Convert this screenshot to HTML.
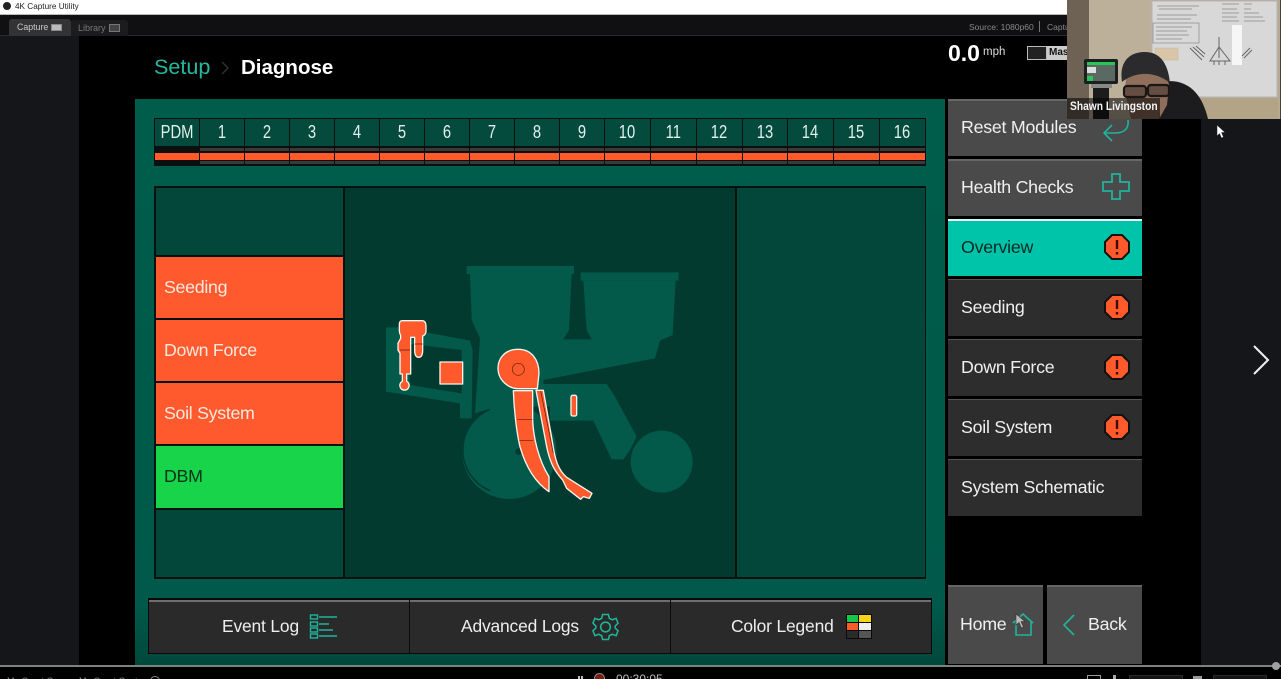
<!DOCTYPE html>
<html><head><meta charset="utf-8">
<style>
html,body{margin:0;padding:0;background:#000}
#p{position:relative;width:1281px;height:679px;overflow:hidden;background:#000;font-family:"Liberation Sans",sans-serif;color:#eee}
#p div,#p span.a,#p svg{position:absolute}
.cell{background:#044a3d;top:119px;height:27px;color:#e2f0ec;font-size:18px;line-height:27px;text-align:center}
.cell span{display:inline-block;transform:scaleX(.82)}
.s1{background:#3a3a3a;top:148px;height:3px}
.s2{background:#ff5a2c;top:153px;height:7px}
.s3{background:#3a3a3a;top:161px;height:3px}
.l{left:156px;width:187px;height:61px;background:#ff5a2e;color:#fbe8de;font-size:17.8px;letter-spacing:-.3px;line-height:61px;text-indent:8px}
.b{left:948px;width:194px;height:57px;font-size:17.8px;letter-spacing:-.25px;line-height:54px;text-indent:13px;color:#f0f0f0;background:#2e2d2d;border-top:1px solid #555;box-sizing:border-box}
.g{background:#4b4a4a;border-top:2px solid #666;line-height:52px}
.bb{top:600px;height:53px;background:#2b2a2a;border-top:2px solid #6e6e6e;box-sizing:border-box;font-size:17.4px;letter-spacing:-.15px;line-height:49px;color:#eee}
.bb span{position:absolute;white-space:nowrap}
</style></head><body>
<div id="p">
<!-- side panels -->
<div style="left:0;top:36px;width:79px;height:629px;background:#15161a"></div>
<div style="left:1201px;top:36px;width:80px;height:629px;background:#15161a"></div>
<!-- title bar -->
<div style="left:0;top:0;width:1281px;height:14px;background:#fff"></div>
<div style="left:0;top:14px;width:1281px;height:1px;background:#bbb"></div>
<div style="left:3px;top:2px;width:8px;height:8px;border-radius:50%;background:#222"></div>
<div style="left:15px;top:1px;font-size:8.2px;line-height:12px;color:#222;white-space:nowrap">4K Capture Utility</div>
<!-- tabs -->
<div style="left:0;top:15px;width:1281px;height:21px;background:#101012;border-bottom:1px solid #2a2a2c;box-sizing:border-box"></div>
<div style="left:9px;top:19px;width:62px;height:17px;background:#333336;border-radius:3px 3px 0 0"></div>
<div style="left:17px;top:21px;font-size:8.8px;line-height:12px;color:#c8c8c8">Capture</div>
<div style="left:51px;top:24px;width:11px;height:7px;background:#bbb;border:1px solid #888;box-sizing:border-box"></div>
<div style="left:71px;top:20px;width:57px;height:16px;background:#1c1c1e;border-radius:3px 3px 0 0"></div>
<div style="left:78px;top:22px;font-size:9px;line-height:12px;color:#777">Library</div>
<div style="left:109px;top:24px;width:11px;height:8px;background:#444;border:1px solid #777;box-sizing:border-box"></div>
<div style="left:969px;top:21px;font-size:8.5px;line-height:12px;color:#8a8a8a;white-space:nowrap">Source: 1080p60</div>
<div style="left:1039px;top:21px;width:1px;height:11px;background:#777"></div>
<div style="left:1047px;top:21px;font-size:8.5px;line-height:12px;color:#8a8a8a;white-space:nowrap">Capture</div>
<!-- heading -->
<div style="left:154px;top:53px;font-size:21.6px;line-height:28px;color:#25b8a0;white-space:nowrap">Setup</div>
<svg style="left:220px;top:60px" width="10" height="16" viewBox="0 0 10 16"><path d="M2 2 L8 8 L2 14" fill="none" stroke="#333" stroke-width="1.4"/></svg>
<div style="left:241px;top:54px;font-size:20.5px;line-height:28px;font-weight:bold;color:#fff;white-space:nowrap">Diagnose</div>
<div style="left:948px;top:38px;font-size:23px;line-height:30px;font-weight:bold;color:#fff;white-space:nowrap">0.0</div>
<div style="left:983px;top:45px;font-size:11.5px;line-height:14px;color:#ddd">mph</div>
<div style="left:1027px;top:46px;width:20px;height:14px;background:#222;border:1px solid #bbb;box-sizing:border-box"></div>
<div style="left:1047px;top:46px;width:22px;height:14px;background:#ccc;color:#111;font-size:10px;font-weight:bold;line-height:14px;overflow:hidden;text-indent:2px">Mas</div>
<!-- green panel -->
<div style="left:135px;top:99px;width:810px;height:566px;background:linear-gradient(#005c4b,#00594a 90%,#01483c)"></div>
<!-- module strip -->
<div style="left:154px;top:118px;width:772px;height:48px;background:#0b0f0e"></div>
<div class="cell" style="left:155px;width:44px"><span>PDM</span></div>
<div style="left:155px;top:153px;width:44px;height:7px;background:#ff5a2c"></div>
<div class="cell" style="left:200px;width:44px"><span>1</span></div><div class="s1" style="left:200px;width:44px"></div><div class="s2" style="left:200px;width:44px"></div><div class="s3" style="left:200px;width:44px"></div>
<div class="cell" style="left:245px;width:44px"><span>2</span></div><div class="s1" style="left:245px;width:44px"></div><div class="s2" style="left:245px;width:44px"></div><div class="s3" style="left:245px;width:44px"></div>
<div class="cell" style="left:290px;width:44px"><span>3</span></div><div class="s1" style="left:290px;width:44px"></div><div class="s2" style="left:290px;width:44px"></div><div class="s3" style="left:290px;width:44px"></div>
<div class="cell" style="left:335px;width:44px"><span>4</span></div><div class="s1" style="left:335px;width:44px"></div><div class="s2" style="left:335px;width:44px"></div><div class="s3" style="left:335px;width:44px"></div>
<div class="cell" style="left:380px;width:44px"><span>5</span></div><div class="s1" style="left:380px;width:44px"></div><div class="s2" style="left:380px;width:44px"></div><div class="s3" style="left:380px;width:44px"></div>
<div class="cell" style="left:425px;width:44px"><span>6</span></div><div class="s1" style="left:425px;width:44px"></div><div class="s2" style="left:425px;width:44px"></div><div class="s3" style="left:425px;width:44px"></div>
<div class="cell" style="left:470px;width:44px"><span>7</span></div><div class="s1" style="left:470px;width:44px"></div><div class="s2" style="left:470px;width:44px"></div><div class="s3" style="left:470px;width:44px"></div>
<div class="cell" style="left:515px;width:44px"><span>8</span></div><div class="s1" style="left:515px;width:44px"></div><div class="s2" style="left:515px;width:44px"></div><div class="s3" style="left:515px;width:44px"></div>
<div class="cell" style="left:560px;width:44px"><span>9</span></div><div class="s1" style="left:560px;width:44px"></div><div class="s2" style="left:560px;width:44px"></div><div class="s3" style="left:560px;width:44px"></div>
<div class="cell" style="left:605px;width:45px"><span>10</span></div><div class="s1" style="left:605px;width:45px"></div><div class="s2" style="left:605px;width:45px"></div><div class="s3" style="left:605px;width:45px"></div>
<div class="cell" style="left:651px;width:45px"><span>11</span></div><div class="s1" style="left:651px;width:45px"></div><div class="s2" style="left:651px;width:45px"></div><div class="s3" style="left:651px;width:45px"></div>
<div class="cell" style="left:697px;width:45px"><span>12</span></div><div class="s1" style="left:697px;width:45px"></div><div class="s2" style="left:697px;width:45px"></div><div class="s3" style="left:697px;width:45px"></div>
<div class="cell" style="left:743px;width:44px"><span>13</span></div><div class="s1" style="left:743px;width:44px"></div><div class="s2" style="left:743px;width:44px"></div><div class="s3" style="left:743px;width:44px"></div>
<div class="cell" style="left:788px;width:45px"><span>14</span></div><div class="s1" style="left:788px;width:45px"></div><div class="s2" style="left:788px;width:45px"></div><div class="s3" style="left:788px;width:45px"></div>
<div class="cell" style="left:834px;width:45px"><span>15</span></div><div class="s1" style="left:834px;width:45px"></div><div class="s2" style="left:834px;width:45px"></div><div class="s3" style="left:834px;width:45px"></div>
<div class="cell" style="left:880px;width:45px"><span>16</span></div><div class="s1" style="left:880px;width:45px"></div><div class="s2" style="left:880px;width:45px"></div><div class="s3" style="left:880px;width:45px"></div>
<!-- main grid -->
<div style="left:154px;top:186px;width:772px;height:393px;background:#06120f"></div>
<div style="left:156px;top:188px;width:187px;height:389px;background:#03463a"></div>
<div style="left:345px;top:188px;width:390px;height:389px;background:#033a30"></div>
<div style="left:737px;top:188px;width:188px;height:389px;background:#03463a"></div>
<div style="left:156px;top:255px;width:187px;height:255px;background:#06120f"></div>
<div class="l" style="top:257px">Seeding</div>
<div class="l" style="top:320px">Down Force</div>
<div class="l" style="top:383px">Soil System</div>
<div class="l" style="top:446px;height:62px;background:#17d44a;color:#06331b">DBM</div>
<!-- illustration -->
<svg style="left:370px;top:250px" width="340" height="260" viewBox="0 0 1020 780">
<g fill="#03594a">
<path d="M290 48H612V72H290Z M632 67H926V92H632Z"/>
<path d="M300 72H605L597 240L580 268H665L650 240L640 92H917L908 255L870 272L855 325L520 390V402H710L735 440L800 560L780 600L760 628H725L670 512H540V470H380L315 490L330 265L305 210Z"/>
<path fill-rule="evenodd" d="M48 232H90L300 272L308 300L305 505H270V460L48 425Z M120 282L275 300V430L120 405Z"/>
<circle cx="875" cy="635" r="93"/>
<circle cx="418" cy="605" r="142"/>
</g>
<path d="M360 478 A132 132 0 0 0 360 722" fill="none" stroke="#033a30" stroke-width="5"/>
<circle cx="446" cy="605" r="10" fill="#033a30"/>
<g fill="#ff5a2c" stroke="#f4f4f0" stroke-width="4" stroke-linejoin="round">
<path d="M96 212H158Q168 214 168 228V245Q166 256 158 258V300Q158 322 146 322Q134 322 134 300V262H122V372H110V394A14 14 0 1 1 97 394V372H90V310L84 300V280L92 265V256Q88 250 88 240V225Q88 212 96 212Z"/>
<rect x="210" y="336" width="68" height="66"/>
<path d="M445 298C400 298 384 330 384 355C384 390 415 416 445 416H502L507 370C507 330 485 298 445 298Z"/>
<path d="M430 422H488L488 510C490 560 505 630 537 680V725C500 700 470 660 450 590C440 550 432 480 430 422Z"/>
<path d="M498 421H520L548 580C555 630 565 660 590 682L666 730L658 745L640 740L632 748L590 715L578 690C555 665 540 640 530 590Z"/>
<rect x="603" y="436" width="17" height="62" rx="5"/>
</g>
<g fill="none" stroke="#5c1f0c" stroke-width="2">
<circle cx="445" cy="358" r="18"/>
<path d="M442 508H487M448 572H490M134 282H158M90 300H120M512 423L550 610"/>
</g>
</svg>
<!-- bottom buttons -->
<div style="left:148px;top:598px;width:784px;height:56px;background:#0a0a0a"></div>
<div class="bb" style="left:149px;width:260px"><span style="left:73px">Event Log</span>
<svg style="left:160px;top:11px" width="30" height="26" viewBox="0 0 30 26"><g fill="none" stroke="#1fb49c" stroke-width="1.4"><rect x="1.5" y="2" width="7" height="4"/><rect x="1.5" y="9" width="7" height="4"/><rect x="1.5" y="15" width="7" height="4"/><rect x="1.5" y="21" width="7" height="4"/><path d="M10 4H28M10 11H20M10 17H24M10 23H28"/></g></svg></div>
<div class="bb" style="left:410px;width:260px"><span style="left:51px">Advanced Logs</span>
<svg style="left:182px;top:11px" width="27" height="28" viewBox="0 0 28 28"><g fill="none" stroke="#1fb49c" stroke-width="1.6"><path d="M11 1H17L18 5L21 6.500L25 5L27 10L24 13V15L27 18L25 23L21 21.500L18 23L17 27H11L10 23L7 21.500L3 23L1 18L4 15V13L1 10L3 5L7 6.500L10 5Z"/><circle cx="14" cy="14" r="5"/></g></svg></div>
<div class="bb" style="left:671px;width:260px"><span style="left:60px">Color Legend</span>
<svg style="left:175px;top:12px" width="26" height="25" viewBox="0 0 26 25"><rect width="26" height="25" fill="#0a0a0a"/><rect x="1" y="1" width="11" height="7" fill="#16c84a"/><rect x="13" y="1" width="12" height="7" fill="#f5d516"/><rect x="1" y="9" width="11" height="7" fill="#ff5a2c"/><rect x="13" y="9" width="12" height="7" fill="#eee"/><rect x="1" y="17" width="11" height="7" fill="#2a2a2a"/><rect x="13" y="17" width="12" height="7" fill="#555"/></svg></div>
<!-- right menu -->
<div class="b g" style="top:99px">Reset Modules
<svg style="left:153px;top:15px" width="30" height="28" viewBox="0 0 30 28"><path d="M27 4C28 12 24 17 14 17H3M11 9L3 17L11 25" fill="none" stroke="#1fb49c" stroke-width="1.600"/></svg></div>
<div class="b g" style="top:159px">Health Checks
<svg style="left:154px;top:12px" width="28" height="27" viewBox="0 0 28 27"><path d="M10 1H18V9H27V18H18V26H10V18H1V9H10Z" fill="none" stroke="#1fb49c" stroke-width="1.800"/></svg></div>
<div class="b" style="top:219px;background:#00c4a9;color:#062a24;border-top:2px solid #e8f5f2;line-height:52px">Overview
<svg style="left:156px;top:13px" width="26" height="26" viewBox="0 0 26 26"><path d="M8 1H18L25 8V18L18 25H8L1 18V8Z" fill="#ff5a2c" stroke="#111" stroke-width="2"/><path d="M13 6V15M13 18V20.500" stroke="#3a0f04" stroke-width="2.400" fill="none"/></svg></div>
<div class="b" style="top:279px">Seeding
<svg style="left:156px;top:14px" width="26" height="26" viewBox="0 0 26 26"><path d="M8 1H18L25 8V18L18 25H8L1 18V8Z" fill="#ff5a2c" stroke="#111" stroke-width="2"/><path d="M13 6V15M13 18V20.500" stroke="#3a0f04" stroke-width="2.400" fill="none"/></svg></div>
<div class="b" style="top:339px">Down Force
<svg style="left:156px;top:14px" width="26" height="26" viewBox="0 0 26 26"><path d="M8 1H18L25 8V18L18 25H8L1 18V8Z" fill="#ff5a2c" stroke="#111" stroke-width="2"/><path d="M13 6V15M13 18V20.500" stroke="#3a0f04" stroke-width="2.400" fill="none"/></svg></div>
<div class="b" style="top:399px">Soil System
<svg style="left:156px;top:14px" width="26" height="26" viewBox="0 0 26 26"><path d="M8 1H18L25 8V18L18 25H8L1 18V8Z" fill="#ff5a2c" stroke="#111" stroke-width="2"/><path d="M13 6V15M13 18V20.500" stroke="#3a0f04" stroke-width="2.400" fill="none"/></svg></div>
<div class="b" style="top:459px">System Schematic</div>
<div class="b g" style="top:585px;left:948px;width:95px;height:79px;line-height:74px;text-indent:12px">Home
<svg style="left:64px;top:26px" width="22" height="24" viewBox="0 0 22 24"><path d="M1 10L11 1L21 10M4 9V22H19V9" fill="none" stroke="#1fb49c" stroke-width="1.600"/></svg>
<svg style="left:67px;top:26px" width="12" height="16" viewBox="0 0 12 16"><path d="M1 1V12L4 9.500L6.500 15L8.500 14L6 8.500H10Z" fill="#bbb" stroke="#333" stroke-width=".6"/></svg></div>
<div class="b g" style="top:585px;left:1047px;width:95px;height:79px;line-height:74px;text-indent:41px">Back
<svg style="left:15px;top:26px" width="14" height="24" viewBox="0 0 14 24"><path d="M12 2L2 12L12 22" fill="none" stroke="#1fb49c" stroke-width="1.600"/></svg></div>
<!-- next chevron -->
<svg style="left:1251px;top:344px" width="20" height="32" viewBox="0 0 20 32"><path d="M3 2L17 16L3 30" fill="none" stroke="#f2f2f2" stroke-width="2"/></svg>
<!-- mouse -->
<svg style="left:1216px;top:124px" width="10" height="15" viewBox="0 0 10 15"><path d="M1 1V12L3.500 9.500L5.500 14L7.500 13L5.500 8.500H9Z" fill="#fff" stroke="#222" stroke-width=".5"/></svg>
<!-- bottom bar -->
<div style="left:0;top:665px;width:1281px;height:2px;background:#7d8280"></div>
<div style="left:1272px;top:662px;width:8px;height:8px;border-radius:50%;background:#a0a0a0"></div>
<div style="left:7px;top:675px;font-size:9px;line-height:12px;color:#888;white-space:nowrap">My Great Game - My Great Capture</div>
<div style="left:150px;top:676px;width:8px;height:8px;border:1px solid #888;border-radius:50%"></div>
<div style="left:578px;top:676px;width:2px;height:6px;background:#bbb"></div>
<div style="left:581px;top:676px;width:2px;height:6px;background:#bbb"></div>
<div style="left:594px;top:673px;width:11px;height:11px;border:1px solid #888;border-radius:50%;background:#7a1c10;box-sizing:border-box"></div>
<div style="left:616px;top:673px;font-size:12px;line-height:13px;color:#bbb">00:30:05</div>
<div style="left:1087px;top:675px;width:12px;height:6px;border:1px solid #999"></div>
<div style="left:1113px;top:675px;width:3px;height:6px;background:#aaa"></div>
<div style="left:1129px;top:675px;width:52px;height:6px;background:#151515;border:1px solid #2a2a2a"></div>
<div style="left:1193px;top:676px;width:9px;height:5px;background:#999"></div>
<div style="left:1213px;top:675px;width:52px;height:6px;background:#151515;border:1px solid #2a2a2a"></div>
<!-- webcam -->
<svg style="left:1067px;top:0" width="214" height="119" viewBox="0 0 214 119">
<rect width="214" height="119" fill="#b8aa92"/>
<rect width="22" height="119" fill="#6e6254"/>
<rect x="22" width="63" height="119" fill="#bdb09a"/>
<rect x="85" y="1" width="125" height="96" fill="#d8d8d8" stroke="#b5b5b5"/>
<rect x="85" y="98" width="126" height="21" fill="#b3a488"/>
<rect x="213" width="1" height="119" fill="#4a4238"/>
<rect x="165" y="25" width="10" height="40" fill="#f6f6f6"/>
<g stroke="#888" stroke-width=".7" fill="none">
<path d="M90 6H132M92 9H125M90 15H130M90 19H124M155 4H172M177 4H185M155 9H170M177 9H184M155 13H172M177 13H192M155 17H170M177 17H196M155 21H172M177 21H198"/>
<rect x="86" y="23" width="46" height="20"/>
<path d="M89 27H125M89 31H120M89 35H122M89 39H115"/>
</g>
<g stroke="#666" stroke-width="1" fill="none">
<path d="M152 37V58M152 47L143 61H163ZM147 61V65M152 61V65M158 61V65M123 48L135 60M126 47L137 57M129 46L138 54M175 56L183 48M177 58L185 50"/>
</g>
<rect x="88" y="48" width="23" height="12" fill="#d9c6a8" stroke="#c9b9a0" stroke-width=".6"/>
<path d="M88 119L100 81C125 80 136 98 141 119Z" fill="#1c1c1e"/>
<rect x="17" y="59" width="34" height="25" fill="#1c1f1f" rx="2"/>
<rect x="20" y="62" width="28" height="19" fill="#5a6a62"/>
<rect x="20" y="62" width="28" height="3" fill="#2bc45a"/>
<rect x="20" y="67" width="9" height="6" fill="#dddddd"/>
<rect x="20" y="76" width="6" height="5" fill="#2bc45a"/>
<rect x="26" y="84" width="16" height="35" fill="#1b1d1b"/>
<rect x="24" y="84" width="21" height="4" fill="#888"/>
<path d="M58 92C58 82 60 72 64 68H98L102 85L100 105L92 119H64Z" fill="#8f6e5c"/>
<path d="M55 82C52 62 62 52 78 52C92 52 101 62 103 83C90 72 70 70 55 82Z" fill="#2b2b2d"/>
<g fill="#3a2e28" fill-opacity=".5" stroke="#1a1614" stroke-width="2.2"><rect x="57" y="86" width="22" height="11" rx="3"/><rect x="81" y="85" width="21" height="11" rx="3"/></g>
<path d="M0 98H93V119H0Z" fill="#000" opacity=".55"/>
</svg>
<div style="left:1070px;top:100px;font-size:11.5px;line-height:15px;font-weight:bold;color:#f4f4f4;white-space:nowrap;transform:scaleX(.89);transform-origin:left">Shawn Livingston</div>
</div>
</body></html>
